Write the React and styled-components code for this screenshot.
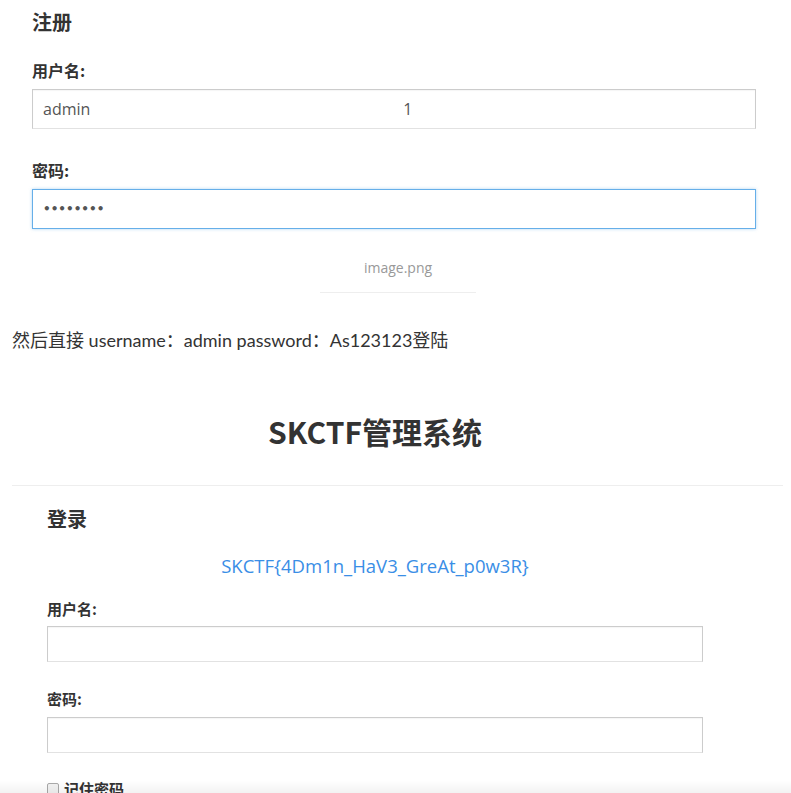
import React from "react";
import styled, { createGlobalStyle } from "styled-components";

const Global = createGlobalStyle`
  html, body { margin: 0; padding: 0; background: #fff; }
  body {
    font-family: "Open Sans", "Noto Sans CJK SC", sans-serif;
    color: #333;
  }
`;

const Page = styled.div`
  padding: 0 7px 40px 12px;
  display: flex;
  flex-direction: column;
`;

const Shot = styled.section`
  display: flex;
  flex-direction: column;
  padding-left: ${(p) => p.$inset}px;
  padding-top: ${(p) => p.$top || 0}px;
`;

const Heading = styled.h3`
  margin: ${(p) => p.$mt || 0}px 0 0;
  font-family: "Noto Sans CJK SC", sans-serif;
  font-size: ${(p) => p.$size}px;
  line-height: 24px;
  font-weight: 700;
  color: #333;
`;

const Label = styled.label`
  display: block;
  margin-top: ${(p) => p.$mt}px;
  font-family: "Noto Sans CJK SC", sans-serif;
  font-size: ${(p) => p.$size}px;
  line-height: 20px;
  font-weight: 700;
  color: #333;
`;

const Field = styled.div`
  box-sizing: border-box;
  margin-top: ${(p) => p.$mt}px;
  width: ${(p) => p.$w}px;
  height: ${(p) => p.$h}px;
  display: flex;
  align-items: center;
  padding: 0 10px;
  font-size: 16px;
  color: #555;
  background: #fff;
  border: 1px solid ${(p) => (p.$focus ? "#66afe9" : "#ccc")};
  border-bottom-color: ${(p) => (p.$focus ? "#66afe9" : "#e2e2e2")};
  box-shadow: ${(p) =>
    p.$focus ? "0 0 3px rgba(102,175,233,0.5)" : "inset 0 1px 1px rgba(0,0,0,0.04)"};
`;

const Spread = styled.span`
  margin-left: ${(p) => p.$gap}px;
`;

const Dots = styled.span`
  font-family: "DejaVu Sans", sans-serif;
  letter-spacing: 0;
  font-size: 12px;
  font-weight: 700;
  color: #555;
`;

const Caption = styled.div`
  align-self: center;
  margin-top: 29px;
  width: 156px;
  padding-bottom: 14px;
  border-bottom: 1px solid #eee;
  text-align: center;
  font-size: 14px;
  line-height: 20px;
  color: #999;
`;

const Para = styled.p`
  margin: 35px 0 0;
  font-family: "Lato", "Noto Sans CJK SC", sans-serif;
  font-size: 18px;
  line-height: 24px;
  color: #333;
`;

const Column = styled.div`
  width: 656px;
  margin-left: 35px;
  display: flex;
  flex-direction: column;
`;

const Title = styled.h1`
  margin: 61px 0 0;
  text-align: center;
  font-family: "Noto Sans CJK SC", sans-serif;
  font-size: 30px;
  line-height: 36px;
  font-weight: 700;
  color: #333;
`;

const Rule = styled.hr`
  margin: 36px 0 0;
  border: 0;
  border-top: 1px solid #eee;
  width: 771px;
`;

const Flag = styled.a`
  margin-top: 23px;
  text-align: center;
  font-size: 18.5px;
  line-height: 24px;
  color: #3a8ee6;
  text-decoration: none;
`;

const CheckRow = styled.div`
  margin-top: 26px;
  display: flex;
  align-items: center;
  gap: 5px;
  font-family: "Noto Sans CJK SC", sans-serif;
  font-size: 15px;
  line-height: 20px;
  font-weight: 700;
`;

const Box = styled.span`
  width: 10px;
  height: 10px;
  border: 1px solid #aaa;
  border-radius: 2px;
  background: #f3f3f3;
`;

const Fade = styled.div`
  position: fixed;
  left: 0;
  right: 0;
  bottom: 0;
  height: 12px;
  background: linear-gradient(to bottom, rgba(0,0,0,0), rgba(0,0,0,0.05));
  pointer-events: none;
`;

export default function App() {
  return (
    <>
      <Global />
      <Page>
        <Shot $inset={20} $top={10}>
          <Heading $size={20}>注册</Heading>
          <Label $mt={26} $size={16}>用户名:</Label>
          <Field $mt={9} $w={724} $h={40}>
            <span>admin</span>
            <Spread $gap={313}>1</Spread>
          </Field>
          <Label $mt={31} $size={16}>密码:</Label>
          <Field $mt={9} $w={724} $h={40} $focus>
            <Dots>••••••••</Dots>
          </Field>
        </Shot>
        <Caption>image.png</Caption>
        <Para>然后直接 username：admin password：As123123登陆</Para>
        <Shot $inset={0}>
          <Column>
            <Title>SKCTF管理系统</Title>
          </Column>
          <Rule />
          <Column>
            <Heading $size={20} $mt={21}>登录</Heading>
            <Flag>SKCTF{"{"}4Dm1n_HaV3_GreAt_p0w3R{"}"}</Flag>
            <Label $mt={21} $size={15}>用户名:</Label>
            <Field $mt={7} $w={656} $h={36} />
            <Label $mt={27} $size={15}>密码:</Label>
            <Field $mt={8} $w={656} $h={36} />
            <CheckRow>
              <Box />
              记住密码
            </CheckRow>
          </Column>
        </Shot>
      </Page>
      <Fade />
    </>
  );
}
